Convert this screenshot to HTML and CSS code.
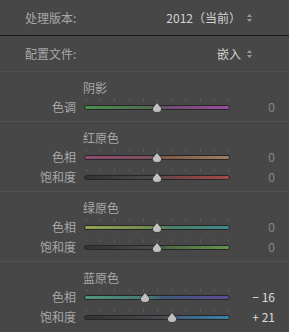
FILE: index.html
```html
<!doctype html>
<html lang="zh-CN">
<head>
<meta charset="utf-8">
<title>HSL / 相机校准</title>
<meta name="viewport" content="width=device-width, initial-scale=1">
<link rel="stylesheet" href="styles.css">
</head>
<body>

<div class="panel">
  <div class="top-row first">
    <span class="top-label">处理版本:</span>
    <span class="picker">2012（当前）<svg class="updown" width="5" height="8" viewBox="0 0 5 8"><path d="M2.5 0L5 3H0Z M0 5H5L2.5 8Z"/></svg></span>
  </div>
  <div class="top-row">
    <span class="top-label">配置文件:</span>
    <span class="picker">嵌入 <svg class="updown" width="5" height="8" viewBox="0 0 5 8"><path d="M2.5 0L5 3H0Z M0 5H5L2.5 8Z"/></svg></span>
  </div>

  <div class="section">
    <div class="sec-title">阴影</div>
    <div class="row">
      <span class="lbl">色调</span>
      <div class="slider"><div class="ticks"></div><div class="track tint"></div><svg class="thumb" style="left:50%" width="11" height="11" viewBox="0 0 11 11"><path d="M5.5 0.5L10 6Q10.5 10.5 5.5 10.5Q0.5 10.5 1 6Z"/></svg></div>
      <span class="val">0</span>
    </div>
  </div>

  <div class="section">
    <div class="sec-title">红原色</div>
    <div class="row">
      <span class="lbl">色相</span>
      <div class="slider"><div class="ticks"></div><div class="track red-hue"></div><svg class="thumb" style="left:50%" width="11" height="11" viewBox="0 0 11 11"><path d="M5.5 0.5L10 6Q10.5 10.5 5.5 10.5Q0.5 10.5 1 6Z"/></svg></div>
      <span class="val">0</span>
    </div>
    <div class="row">
      <span class="lbl">饱和度</span>
      <div class="slider"><div class="ticks"></div><div class="track red-sat"></div><svg class="thumb" style="left:50%" width="11" height="11" viewBox="0 0 11 11"><path d="M5.5 0.5L10 6Q10.5 10.5 5.5 10.5Q0.5 10.5 1 6Z"/></svg></div>
      <span class="val">0</span>
    </div>
  </div>

  <div class="section">
    <div class="sec-title">绿原色</div>
    <div class="row">
      <span class="lbl">色相</span>
      <div class="slider"><div class="ticks"></div><div class="track green-hue"></div><svg class="thumb" style="left:50%" width="11" height="11" viewBox="0 0 11 11"><path d="M5.5 0.5L10 6Q10.5 10.5 5.5 10.5Q0.5 10.5 1 6Z"/></svg></div>
      <span class="val">0</span>
    </div>
    <div class="row">
      <span class="lbl">饱和度</span>
      <div class="slider"><div class="ticks"></div><div class="track green-sat"></div><svg class="thumb" style="left:50%" width="11" height="11" viewBox="0 0 11 11"><path d="M5.5 0.5L10 6Q10.5 10.5 5.5 10.5Q0.5 10.5 1 6Z"/></svg></div>
      <span class="val">0</span>
    </div>
  </div>

  <div class="section last">
    <div class="sec-title">蓝原色</div>
    <div class="row">
      <span class="lbl">色相</span>
      <div class="slider"><div class="ticks"></div><div class="track blue-hue"></div><svg class="thumb" style="left:42%" width="11" height="11" viewBox="0 0 11 11"><path d="M5.5 0.5L10 6Q10.5 10.5 5.5 10.5Q0.5 10.5 1 6Z"/></svg></div>
      <span class="val changed">− 16</span>
    </div>
    <div class="row">
      <span class="lbl">饱和度</span>
      <div class="slider"><div class="ticks"></div><div class="track blue-sat"></div><svg class="thumb" style="left:60.5%" width="11" height="11" viewBox="0 0 11 11"><path d="M5.5 0.5L10 6Q10.5 10.5 5.5 10.5Q0.5 10.5 1 6Z"/></svg></div>
      <span class="val changed">+ 21</span>
    </div>
  </div>
</div>

</body>
</html>
```

FILE: styles.css
```css
html, body {
  margin: 0;
  background: #474747;
}
body {
  font: 12px/18px "Noto Sans CJK SC", "Liberation Sans", sans-serif;
  color: #a8a8a8;
}
.panel {
  width: 289px;
  height: 332px;
  overflow: hidden;
}
.top-row {
  height: 35px;
  display: flex;
  align-items: center;
  justify-content: space-between;
  padding: 0 37px 0 25px;
  border-bottom: 1px solid #505050;
}
.top-row.first {
  border-bottom-color: #161616;
}
.picker {
  display: flex;
  align-items: center;
  color: #d2d2d2;
}
.updown {
  fill: #9a9a9a;
  margin-left: 6px;
}
.section {
  padding: 7px 0 4px;
  border-bottom: 1px solid #525252;
}
.section.last {
  border-bottom: 0;
}
.sec-title {
  padding-left: 83px;
  height: 18px;
}
.row {
  height: 20px;
  display: flex;
  align-items: center;
}
.lbl {
  width: 76px;
  text-align: right;
}
.slider {
  position: relative;
  width: 146px;
  margin-left: 8px;
  margin-top: -6px;
  display: flex;
  flex-direction: column;
  gap: 3px;
}
.ticks {
  height: 3px;
  margin: 0 1px 0 2px;
  background: repeating-linear-gradient(to right, #5c5c5c 0 1px, transparent 1px 14.2px);
}
.track {
  height: 3px;
  border: 1px solid #262626;
  border-radius: 3px;
}
.tint { background: linear-gradient(to right, #4a8e4e, #4e6a4e 48%, #6a4e6e 55%, #9c4aa4); }
.red-hue { background: linear-gradient(to right, #8e4a72, #7a5058 50%, #7e5a48 55%, #a07e5e); }
.red-sat { background: linear-gradient(to right, #323232, #4e4a4a 50%, #6e4444 58%, #a84848); }
.green-hue { background: linear-gradient(to right, #92a254, #6e8a50 50%, #4a7e64 58%, #3e8a8c); }
.green-sat { background: linear-gradient(to right, #323232, #4a4e48 50%, #4e6a42 58%, #62944a); }
.blue-hue { background: linear-gradient(to right, #50947e, #467874 45%, #3e5a7a 55%, #5e4a96); }
.blue-sat { background: linear-gradient(to right, #323232, #484c50 55%, #3e6284 65%, #3a80a8); }
.thumb {
  position: absolute;
  top: 3px;
  transform: translateX(-50%);
  fill: #c0c0c0;
  stroke: #2e2e2e;
  stroke-width: 0.8;
}
.val {
  flex: 1;
  text-align: right;
  padding-right: 14px;
  color: #888;
}
.val.changed {
  color: #dcdcdc;
}
```
